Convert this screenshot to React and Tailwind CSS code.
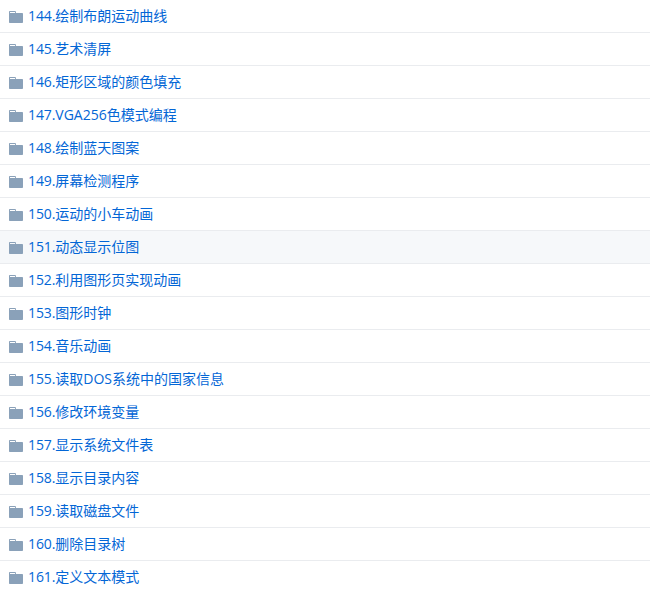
const items = [
  '144.绘制布朗运动曲线',
  '145.艺术清屏',
  '146.矩形区域的颜色填充',
  '147.VGA256色模式编程',
  '148.绘制蓝天图案',
  '149.屏幕检测程序',
  '150.运动的小车动画',
  '151.动态显示位图',
  '152.利用图形页实现动画',
  '153.图形时钟',
  '154.音乐动画',
  '155.读取DOS系统中的国家信息',
  '156.修改环境变量',
  '157.显示系统文件表',
  '158.显示目录内容',
  '159.读取磁盘文件',
  '160.删除目录树',
  '161.定义文本模式',
];

function FolderIcon() {
  return (
    <svg width="14" height="12" viewBox="0 0 14 12" className="mt-[2px] shrink-0 fill-[#8aa1b9]">
      <path d="M0 1C0 .4.4 0 1 0h5.2c.4 0 .7.3.7.7V2H13c.6 0 1 .4 1 1v8c0 .6-.4 1-1 1H1c-.6 0-1-.4-1-1V1zM1 1v1h5V1H1z" fillRule="evenodd" />
    </svg>
  );
}

export default function App() {
  return (
    <div className="w-[650px] bg-white font-['Open_Sans','Noto_Sans_CJK_SC',sans-serif] text-sm">
      {items.map((item, i) => (
        <div
          key={item}
          className={`flex h-[33px] items-center gap-[5px] border-b border-[#eaecef] pl-[9px] ${i === 7 ? 'bg-[#f6f8fa]' : ''}`}
        >
          <FolderIcon />
          <span className="text-[#0366d6]">
            <span className="tracking-[-0.1px]">{item.slice(0, 4)}</span>
            {item.slice(4)}
          </span>
        </div>
      ))}
    </div>
  );
}
